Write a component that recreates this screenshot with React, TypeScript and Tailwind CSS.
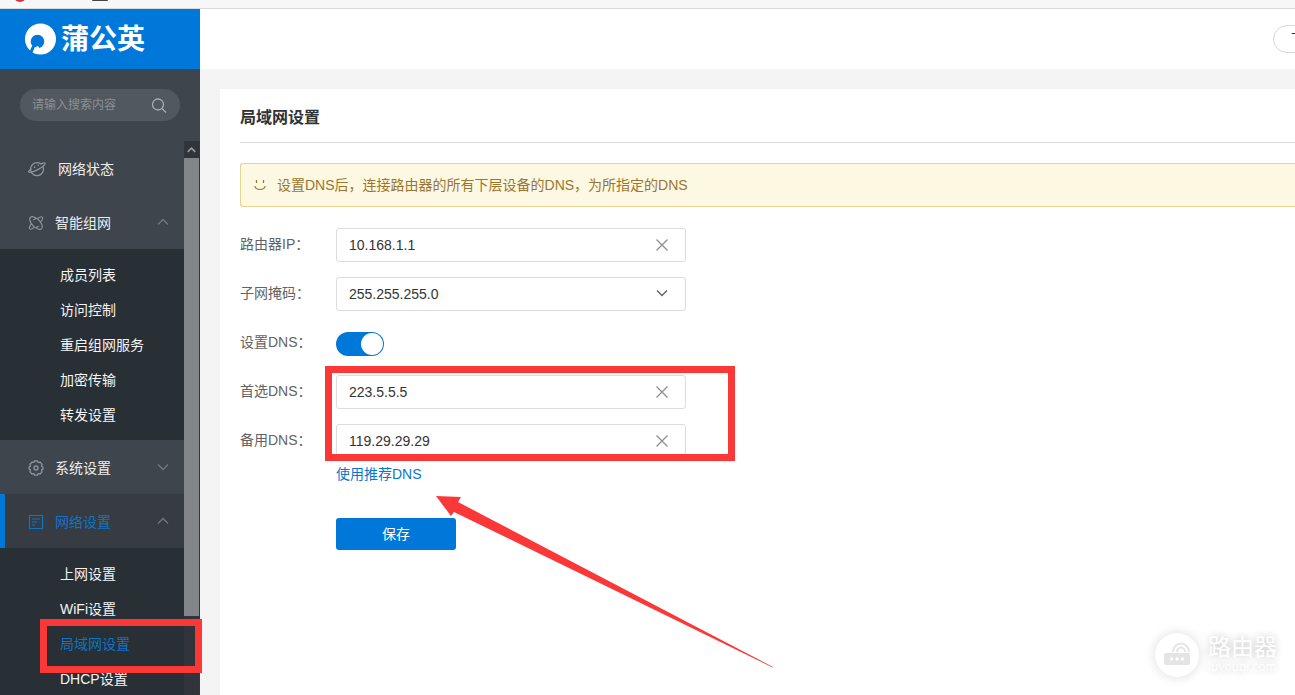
import { useState } from 'react'
import type { ReactNode } from 'react'
import { clsx } from 'clsx'

type MenuGroup = {
  name: string
  icon: ReactNode
  items?: string[]
  open?: boolean
  active?: boolean
  wide?: boolean
}

const CURRENT = '局域网设置'

const PlanetIcon = () => (
  <svg className="h-[18px] w-[18px]" viewBox="0 0 18 18" fill="none" stroke="currentColor" strokeWidth="1.3" strokeLinecap="round">
    <path d="M15.2 7a6.500 6.500 0 1 1-2.200-3" />
    <path d="M13.400 3.600c2-.8 3.400-.9 3.700-.3.6 1.100-2.700 3.900-7.300 6.300-4.500 2.300-8.500 3.300-9 2.300-.3-.6.500-1.700 2-2.900" />
    <path d="M6.400 7.400l.6-.4M10 5.300l.4-.2" />
  </svg>
)

const NetIcon = () => (
  <svg className="h-4 w-4" viewBox="0 0 16 16" fill="none" stroke="currentColor" strokeWidth="1.2">
    <ellipse cx="8" cy="8" rx="8" ry="4" transform="rotate(45 8 8)" />
    <path d="M9.500 3.700c2.200-1.800 4-2.300 4.700-1.600.8.8.1 2.800-1.600 5M6.500 12.300c-2.200 1.800-4 2.300-4.700 1.600-.8-.8-.1-2.800 1.600-5" />
    <path d="M10.800 10.800c-1.200 1.200-2 1.500-2.800 1.500M5.200 5.200C6.400 4 7.200 3.700 8 3.700" />
  </svg>
)

const GearIcon = () => (
  <svg className="h-4 w-4" viewBox="0 0 16 16" fill="none" stroke="currentColor" strokeWidth="1.3" strokeLinejoin="round">
    <path d="M6.500 1h3l.7 1.500 2-.3 1.900 2.200-.6 1.800 1.500 1.100v1.600l-1.500 1.200.5 1.800-1.900 2.100-2-.3-.6 1.400h-3l-.8-1.500-1.900.3-1.900-2.200.6-1.700L1 8.800V7.200l1.500-1.100L2 4.300l1.900-2.100 1.900.2z" />
    <circle cx="8" cy="8" r="2" />
  </svg>
)

const ListIcon = () => (
  <svg className="h-4 w-4" viewBox="0 0 16 16" fill="none" stroke="currentColor" strokeWidth="1.2">
    <path d="M1.500 1.500h13v13h-13zM4 5h8M4 8h5M4 11h3" />
  </svg>
)

const menu: MenuGroup[] = [
  { name: '网络状态', icon: <PlanetIcon />, wide: true },
  {
    name: '智能组网',
    icon: <NetIcon />,
    open: true,
    items: ['成员列表', '访问控制', '重启组网服务', '加密传输', '转发设置'],
  },
  { name: '系统设置', icon: <GearIcon />, items: [] },
  {
    name: '网络设置',
    icon: <ListIcon />,
    open: true,
    active: true,
    items: ['上网设置', 'WiFi设置', CURRENT, 'DHCP设置'],
  },
]

function Chevron({ up, className }: { up?: boolean; className?: string }) {
  return (
    <svg className={className} viewBox="0 0 12 8" fill="none" stroke="currentColor">
      <path d={up ? 'M1 6.500l5-5 5 5' : 'M1 1.500l5 5 5-5'} />
    </svg>
  )
}

function Sidebar() {
  return (
    <aside className="relative z-10 w-50 shrink-0 bg-[#3e454d]">
      <div className="flex h-full flex-col overflow-hidden">
        <div className="flex h-15 shrink-0 items-center gap-[5px] bg-[#0078d9] pl-6 text-white">
          <svg className="h-8 w-8" viewBox="0 0 32 32">
            <circle cx="16.500" cy="16" r="15.500" fill="#fff" />
            <circle cx="13.500" cy="18.500" r="6.800" fill="#0078d9" />
            <path d="M9.800 23L6 31" stroke="#0078d9" strokeWidth="3" />
            <path d="M10.600 24.500l3.400-1.500 2 3-6.200 3.500z" fill="#fff" />
          </svg>
          <span className="pt-[2px] text-[28px] leading-8 font-bold">蒲公英</span>
        </div>

        <div className="shrink-0 px-5 py-5">
          <div className="flex h-8 items-center rounded-full bg-[#52585f] px-3">
            <input
              type="text"
              aria-label="搜索"
              placeholder="请输入搜索内容"
              className="w-full min-w-0 text-xs text-white outline-none placeholder:text-[#8b9095]"
            />
            <button type="button" aria-label="搜索" className="shrink-0 text-[#a9adb1]">
              <svg className="h-[18px] w-[18px]" viewBox="0 0 18 18" fill="none" stroke="currentColor" strokeWidth="1.300">
                <circle cx="8" cy="8.500" r="5.500" />
                <path d="M12 12.500l4 4" />
              </svg>
            </button>
          </div>
        </div>

        <div className="flex min-h-0 flex-1">
          <nav className="min-w-0 flex-1 overflow-hidden text-sm">
            {menu.map(group => (
              <div key={group.name}>
                <button
                  type="button"
                  className={clsx(
                    'flex h-[54px] w-full items-center pt-[2px] pr-[15px]',
                    group.active
                      ? 'border-l-[5px] border-[#0078d9] bg-[#363c42] pl-[23px] text-[#0f74c4]'
                      : 'pl-7 text-[#eceded]',
                  )}>
                  <span className={clsx('shrink-0', group.active ? 'text-[#0f74c4]' : 'text-[#8f9499]')}>{group.icon}</span>
                  <span className={group.wide ? 'ml-3' : 'ml-[11px]'}>{group.name}</span>
                  {group.items && <Chevron up={group.open} className="mb-[2px] ml-auto h-2 w-3 stroke-[1.3] text-[#72787e]" />}
                </button>
                {group.open && (
                  <ul className="bg-[#282f35] py-2">
                    {group.items?.map(item => (
                      <li key={item}>
                        <a
                          href="#"
                          className={clsx('block h-[35px] pl-15 leading-[37px]', item === CURRENT ? 'text-[#0f74c4]' : 'text-[#f4f4f4]')}>
                          {item}
                        </a>
                      </li>
                    ))}
                  </ul>
                )}
              </div>
            ))}
          </nav>

          {/* Scrollbar */}
          <div className="flex w-4 shrink-0 flex-col border-r border-[#34383d] bg-[#2f353b]">
            <div className="flex h-[17px] shrink-0 items-center justify-center bg-[#30353c] text-[#9a9da1]">
              <Chevron up className="h-[6px] w-[9px] stroke-2" />
            </div>
            <div className="h-[458px] shrink-0 bg-[#828589]" />
          </div>
        </div>
      </div>

      <div className="pointer-events-none absolute top-[610px] left-10 h-[54px] w-[162px] border-7 border-[#fb3838]" />
    </aside>
  )
}

function Row({ label, id, children }: { label: string; id: string; children: ReactNode }) {
  return (
    <div className="flex h-[34px] items-center">
      <label htmlFor={id} className="w-24 shrink-0 self-start leading-8 text-[#626262]">{label}</label>
      {children}
    </div>
  )
}

function ClearableInput({ id, value, onChange }: { id: string; value: string; onChange: (v: string) => void }) {
  return (
    <div className="flex h-full w-[350px] items-center rounded-[3px] border border-[#dcdcdc] px-3">
      <input
        id={id}
        type="text"
        value={value}
        onChange={e => onChange(e.target.value)}
        className="min-w-0 flex-1 text-[#333] outline-none"
      />
      <button type="button" aria-label="清除" onClick={() => onChange('')} className="mr-[5px] text-[#8c8c8c]">
        <svg className="h-3 w-3" viewBox="0 0 12 12" fill="none" stroke="currentColor" strokeWidth="1.2">
          <path d="M.5.5l11 11M11.500.5l-11 11" />
        </svg>
      </button>
    </div>
  )
}

function Watermark() {
  return (
    <div className="pointer-events-none absolute right-[18px] bottom-[18px] flex items-center gap-[9px] text-white">
      <div className="flex h-11 w-11 items-center justify-center rounded-full bg-white shadow-[0_0_12px_rgba(0,0,0,0.14)]">
        <svg className="h-7 w-7" viewBox="0 0 28 28" fill="none" stroke="#e4e4e4" strokeWidth="2">
          <rect x="1" y="12" width="26" height="12" rx="2" fill="#e4e4e4" stroke="none" />
          <path d="M10 11a8 8.500 0 0 1 16 0M14 11a4 4.500 0 0 1 8 0" />
          <g fill="#fff" stroke="none">
            <circle cx="8.500" cy="18" r="1.700" />
            <circle cx="14" cy="18" r="1.700" />
            <circle cx="19.500" cy="18" r="1.700" />
          </g>
        </svg>
      </div>
      <div className="[text-shadow:0_0_8px_rgba(0,0,0,0.18),0_0_8px_rgba(0,0,0,0.1)]">
        <div className="text-[23px] leading-6">路由器</div>
        <div className="font-['Open_Sans',sans-serif] text-xs leading-4 font-medium">luyouqi.com</div>
      </div>
    </div>
  )
}

export default function App() {
  const [ip, setIp] = useState('10.168.1.1')
  const [mask, setMask] = useState('255.255.255.0')
  const [dnsOn, setDnsOn] = useState(true)
  const [dns1, setDns1] = useState('223.5.5.5')
  const [dns2, setDns2] = useState('119.29.29.29')

  return (
    <div className="flex h-screen flex-col overflow-hidden bg-[#f4f4f4] font-['Liberation_Sans','Noto_Sans_CJK_SC',sans-serif] text-sm">
      {/* Bottom edge of the browser toolbar */}
      <div className="h-[9px] shrink-0 border-b border-[#d9d9d9] bg-[#f7f7f7]">
        <svg className="h-2 w-30" viewBox="0 0 120 8">
          <circle cx="20" cy="-4" r="6" fill="#e0303a" />
          <rect x="92" y="-2" width="16" height="3" rx="1" fill="#444" />
        </svg>
      </div>

      <div className="flex min-h-0 flex-1">
        <Sidebar />

        <main className="relative flex min-w-0 flex-1 flex-col overflow-hidden">
          <header className="flex h-15 shrink-0 items-center justify-end bg-white">
            <button type="button" className="-mr-[74px] h-7 w-24 shrink-0 rounded-full border border-[#d5d5d5] pl-[17px] text-left text-[#333]">
              下载
            </button>
          </header>

          <section className="mt-5 ml-5 flex-1 bg-white pl-5">
            <h1 className="h-[54px] border-b border-[#dcdcdc] text-base leading-[58px] font-bold text-[#303133]">局域网设置</h1>

            <div className="mt-5 flex h-11 items-center rounded-l-[3px] border border-r-0 border-[#e6d48f] bg-[#fdf8e2] pl-[13px] text-[#9a7530]">
              <svg className="h-3 w-3" viewBox="0 0 12 12" fill="none" stroke="currentColor" strokeWidth="1.2">
                <path d="M2.500 1v3M9.500 1v3M.8 7.200c1.200 4.400 9.200 4.400 10.400 0" />
              </svg>
              <span className="ml-[11px]">设置DNS后，连接路由器的所有下层设备的DNS，为所指定的DNS</span>
            </div>

            <form className="mt-[21px]" onSubmit={e => e.preventDefault()}>
              <div className="flex flex-col gap-[15px]">
                <Row label="路由器IP：" id="ip">
                  <ClearableInput id="ip" value={ip} onChange={setIp} />
                </Row>
                <Row label="子网掩码：" id="mask">
                  <div className="relative h-full w-[350px]">
                    <select
                      id="mask"
                      value={mask}
                      onChange={e => setMask(e.target.value)}
                      className="h-full w-full appearance-none rounded-[3px] border border-[#dcdcdc] bg-white px-3 text-[#333] outline-none">
                      <option>255.255.255.0</option>
                      <option>255.255.0.0</option>
                      <option>255.0.0.0</option>
                    </select>
                    <Chevron className="pointer-events-none absolute top-3 right-[18px] h-2 w-3 stroke-[1.5] text-[#666]" />
                  </div>
                </Row>
                <Row label="设置DNS：" id="dns-on">
                  <input
                    id="dns-on"
                    type="checkbox"
                    checked={dnsOn}
                    onChange={e => setDnsOn(e.target.checked)}
                    className="mt-[2px] flex h-6 w-12 appearance-none items-center rounded-full bg-[#c8c8c8] px-px before:h-[22px] before:w-[22px] before:rounded-full before:bg-white checked:justify-end checked:bg-[#0078d9]"
                  />
                </Row>
                <div className="relative flex flex-col gap-[15px]">
                  <Row label="首选DNS：" id="dns1">
                    <ClearableInput id="dns1" value={dns1} onChange={setDns1} />
                  </Row>
                  <Row label="备用DNS：" id="dns2">
                    <ClearableInput id="dns2" value={dns2} onChange={setDns2} />
                  </Row>
                  <div className="pointer-events-none absolute -top-[9px] left-[85px] h-[95px] w-[410px] border-7 border-[#fb3838]" />
                  <svg className="pointer-events-none absolute top-[120px] left-[195px] h-[174px] w-[340px]" viewBox="0 0 340 174" fill="#fb3838">
                    <path d="M1 1l25 1-3 5 315 165-.5.4L19 17l-3 4z" />
                  </svg>
                </div>
              </div>

              <div className="ml-24 flex flex-col items-start">
                <a href="#" className="mt-1 leading-6 text-[#0a76cc]">使用推荐DNS</a>
                <button type="submit" className="mt-8 h-8 w-30 rounded-[3px] bg-[#0078d9] text-white">保存</button>
              </div>
            </form>
          </section>

          <Watermark />
        </main>
      </div>
    </div>
  )
}
